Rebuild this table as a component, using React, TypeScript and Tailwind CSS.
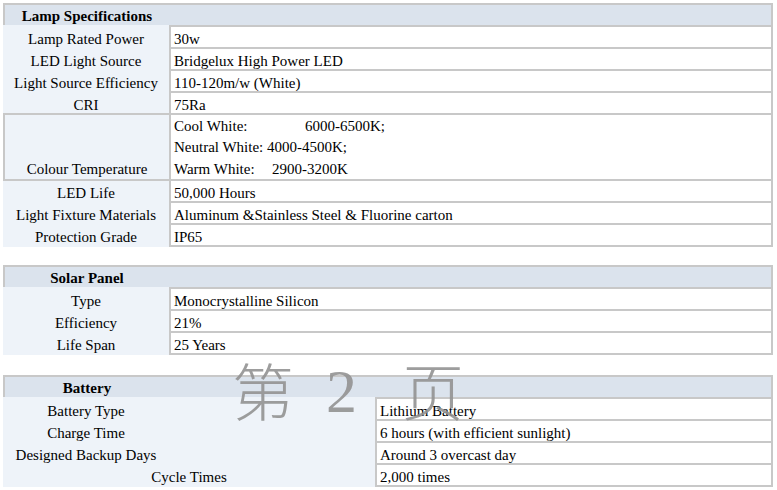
import React from "react";

const B = "border-[#c8c8c8]";

type Row = { label: React.ReactNode; value: React.ReactNode; h?: string; bottomLabel?: boolean; ctBox?: boolean; topGray?: boolean };

function Header({ title }: { title: string }) {
  return (
    <div className={`flex h-[22px] border-t-2 border-l-2 border-r-2 ${B} bg-[#dbe3ed]`}>
      <div className="w-[164px] pt-[1px] text-center font-bold leading-[20px]">{title}</div>
    </div>
  );
}

function Table({ title, rows, labelW = "w-[166px]" }: { title: string; rows: Row[]; labelW?: string }) {
  return (
    <div className="flex flex-col">
      <Header title={title} />
      {rows.map((r, i) => {
        const last = i === rows.length - 1;
        return (
          <div key={i} className={`flex ${r.h ?? "h-[22px]"} ${last ? "h-[24px]" : ""}`}>
            <div
              className={`${labelW} shrink-0 bg-[#eef3f9] flex ${r.bottomLabel ? "items-end" : "items-start pt-[4px]"} ${
                r.ctBox ? `border-t-2 border-l-2 ${B}` : ""
              } ${r.topGray ? `border-t-2 ${B} !pt-[2px]` : ""}`}
            >
              {r.label}
            </div>
            <div
              className={`flex-1 bg-white border-t-2 border-l-2 border-r-2 ${last ? "border-b-2" : ""} ${B} pl-[3px] ${
                r.bottomLabel ? "pt-[1px]" : "pt-[2px]"
              } leading-[20px]`}
            >
              {r.value}
            </div>
          </div>
        );
      })}
    </div>
  );
}

const L = ({ children, w = "w-[166px]" }: { children: React.ReactNode; w?: string }) => (
  <div className={`${w} text-center leading-[20px]`}>{children}</div>
);

const SERIF = "font-['Liberation_Serif','Tinos','Times_New_Roman','DejaVu_Serif',serif]";

export default function App() {
  const lamp: Row[] = [
    { label: <L>Lamp Rated Power</L>, value: "30w" },
    { label: <L>LED Light Source</L>, value: "Bridgelux High Power LED" },
    { label: <L>Light Source Efficiency</L>, value: "110-120m/w (White)" },
    { label: <L>CRI</L>, value: "75Ra" },
    {
      label: <L w="w-[164px]">Colour Temperature</L>,
      h: "h-[66px]",
      bottomLabel: true,
      ctBox: true,
      value: (
        <div className="flex flex-col leading-[21.3px]">
          <div>
            <span className="inline-block w-[131px]">Cool White:</span>6000-6500K;
          </div>
          <div>Neutral White: 4000-4500K;</div>
          <div>
            <span className="inline-block w-[98px]">Warm White:</span>2900-3200K
          </div>
        </div>
      ),
    },
    { label: <L>LED Life</L>, value: "50,000 Hours", topGray: true },
    { label: <L>Light Fixture Materials</L>, value: "Aluminum &Stainless Steel & Fluorine carton" },
    { label: <L>Protection Grade</L>, value: "IP65" },
  ];
  const solar: Row[] = [
    { label: <L>Type</L>, value: "Monocrystalline Silicon" },
    { label: <L>Efficiency</L>, value: "21%" },
    { label: <L>Life Span</L>, value: "25 Years" },
  ];
  const battery: Row[] = [
    { label: <L>Battery Type</L>, value: "Lithium Battery" },
    { label: <L>Charge Time</L>, value: "6 hours (with efficient sunlight)" },
    { label: <L>Designed Backup Days</L>, value: "Around 3 overcast day" },
    { label: <L w="w-[372px]">Cycle Times</L>, value: "2,000 times" },
  ];
  return (
    <div
      className={`relative w-[777px] h-[490px] bg-white text-black text-[15px] pl-[3px] pr-[4px] pt-[3px] overflow-hidden ${SERIF}`}
    >
      <Table title="Lamp Specifications" rows={lamp} />
      <div className="mt-[18px]">
        <Table title="Solar Panel" rows={solar} />
      </div>
      <div className="mt-[20px]">
        <Table title="Battery" rows={battery} labelW="w-[372px]" />
      </div>
      <div className="pointer-events-none absolute left-[232px] top-[350px] text-[62px] leading-none text-[#939393] opacity-90">
        <span className="absolute left-0 top-[8px] font-light font-['Noto_Sans_CJK_SC',sans-serif]">第</span>
        <span className={`absolute left-[94px] top-[10px] ${SERIF}`}>2</span>
        <span className="absolute left-[170px] top-[8px] font-light font-['Noto_Sans_CJK_SC',sans-serif]">页</span>
      </div>
    </div>
  );
}
